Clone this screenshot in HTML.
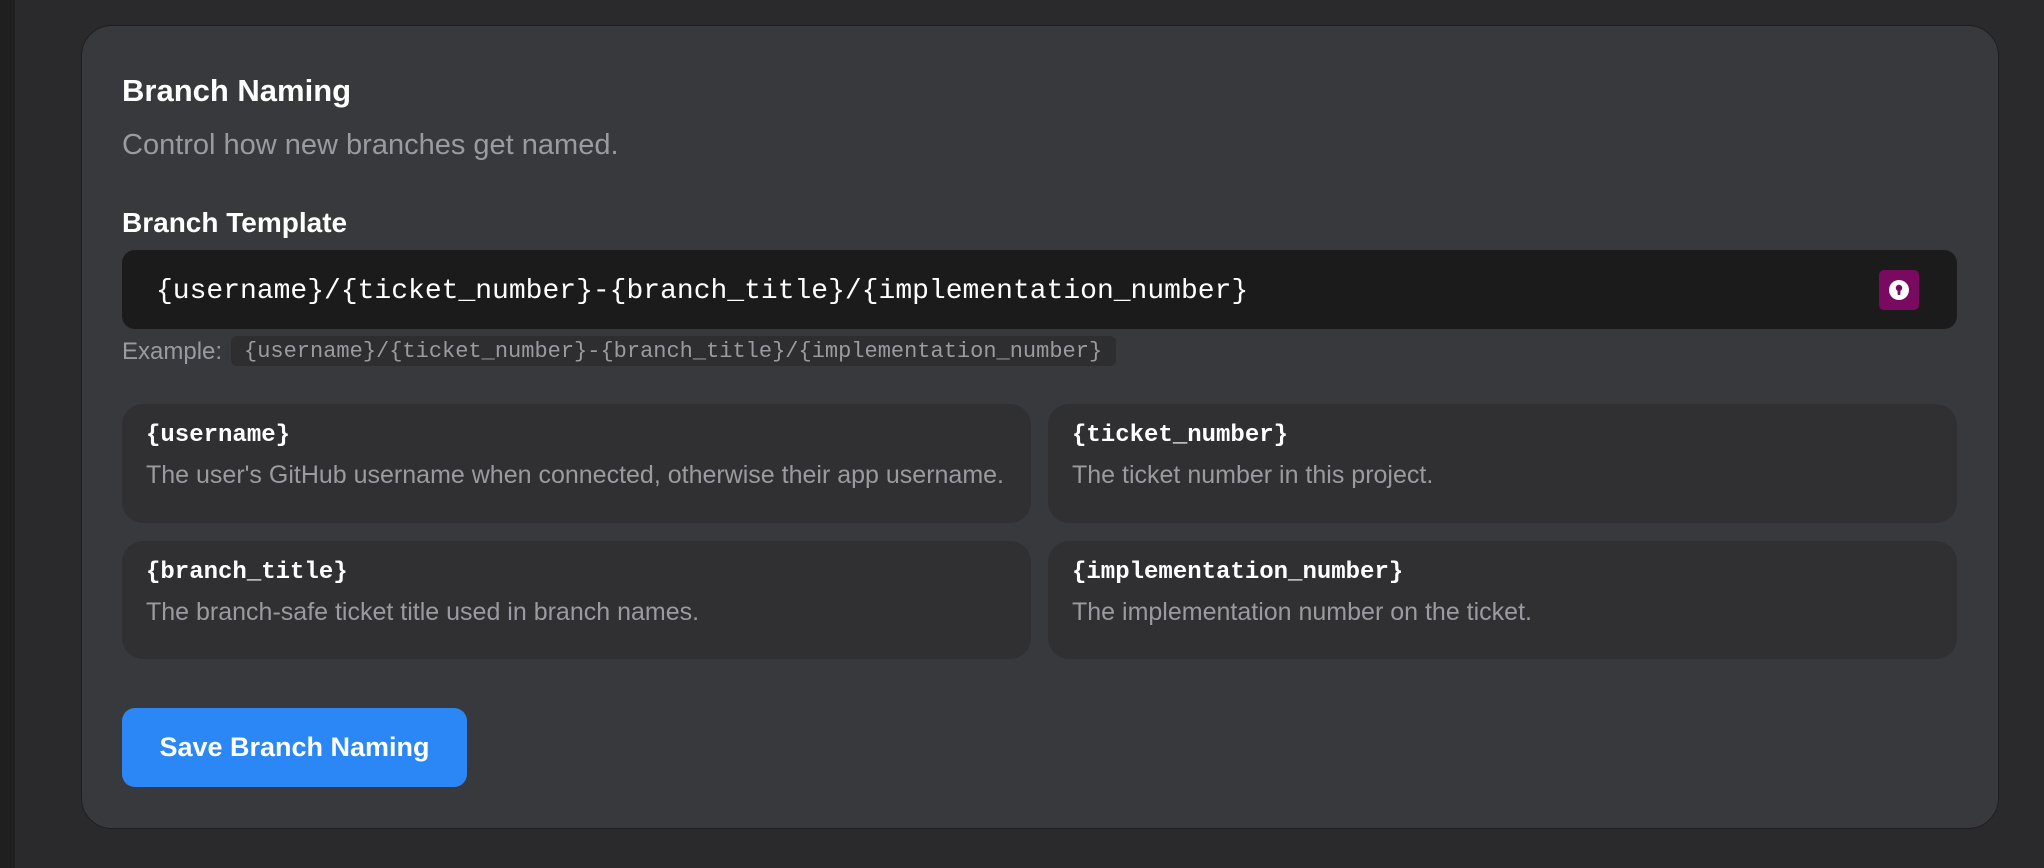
<!DOCTYPE html>
<html><head><meta charset="utf-8"><style>
*{margin:0;padding:0;box-sizing:border-box}
body{width:2044px;height:868px;background:#2a2a2c;position:relative;overflow:hidden;font-family:"Liberation Sans",sans-serif}
.strip{position:absolute;left:0;top:0;width:15px;height:868px;background:#1f1f20}
.card{position:absolute;left:81px;top:25px;width:1918px;height:804px;background:#38393c;border:1.5px solid #1f1f21;border-radius:31px}
.a{position:absolute;white-space:nowrap}
.mono{font-family:"Liberation Mono",monospace}
.box{position:absolute;background:#303033;border-radius:21px}
.t{position:absolute;left:24px;top:18px;font-family:"Liberation Mono",monospace;font-weight:bold;font-size:24px;color:#fff}
.d{position:absolute;left:24px;top:57px;font-size:25px;color:#9a9aa0;white-space:nowrap}
</style></head><body>
<div class="strip"></div>
<div class="card"></div>
<div class="a" style="left:122px;top:73px;font-size:31px;font-weight:bold;color:#fff">Branch Naming</div>
<div class="a" style="left:122px;top:129px;font-size:29px;color:#9a9aa0">Control how new branches get named.</div>
<div class="a" style="left:122px;top:207px;font-size:28px;font-weight:bold;color:#fff">Branch Template</div>
<div class="a" style="left:122px;top:250px;width:1835px;height:79px;background:#1b1b1b;border-radius:13px"></div>
<div class="a mono" style="left:156px;top:276px;font-size:28px;color:#fff">{username}/{ticket_number}-{branch_title}/{implementation_number}</div>
<div class="a" style="left:1879px;top:270px;width:40px;height:40px;background:#7a0a60;border-radius:5px">
<svg width="40" height="40" viewBox="0 0 40 40"><circle cx="20" cy="20" r="10" fill="#fff"/><circle cx="20" cy="18" r="3.2" fill="#7a0a60"/><rect x="18.6" y="18" width="2.8" height="7" rx="1" fill="#7a0a60"/></svg></div>
<div class="a" style="left:122px;top:338px;font-size:24px;color:#9a9aa0">Example:</div>
<div class="a mono" style="left:231px;top:336px;width:885px;height:30px;background:#2e2e31;border-radius:6px;font-size:22px;color:#9a9aa0;padding:3px 0 0 13px">{username}/{ticket_number}-{branch_title}/{implementation_number}</div>
<div class="box" style="left:122px;top:404px;width:909px;height:119px"><div class="t">{username}</div><div class="d">The user's GitHub username when connected, otherwise their app username.</div></div>
<div class="box" style="left:1048px;top:404px;width:909px;height:119px"><div class="t">{ticket_number}</div><div class="d">The ticket number in this project.</div></div>
<div class="box" style="left:122px;top:541px;width:909px;height:118px"><div class="t">{branch_title}</div><div class="d">The branch-safe ticket title used in branch names.</div></div>
<div class="box" style="left:1048px;top:541px;width:909px;height:118px"><div class="t">{implementation_number}</div><div class="d">The implementation number on the ticket.</div></div>
<div class="a" style="left:122px;top:708px;width:345px;height:79px;background:#2b87f6;border-radius:13px;color:#fff;font-weight:bold;font-size:27px;text-align:center;line-height:79px">Save Branch Naming</div>
</body></html>
